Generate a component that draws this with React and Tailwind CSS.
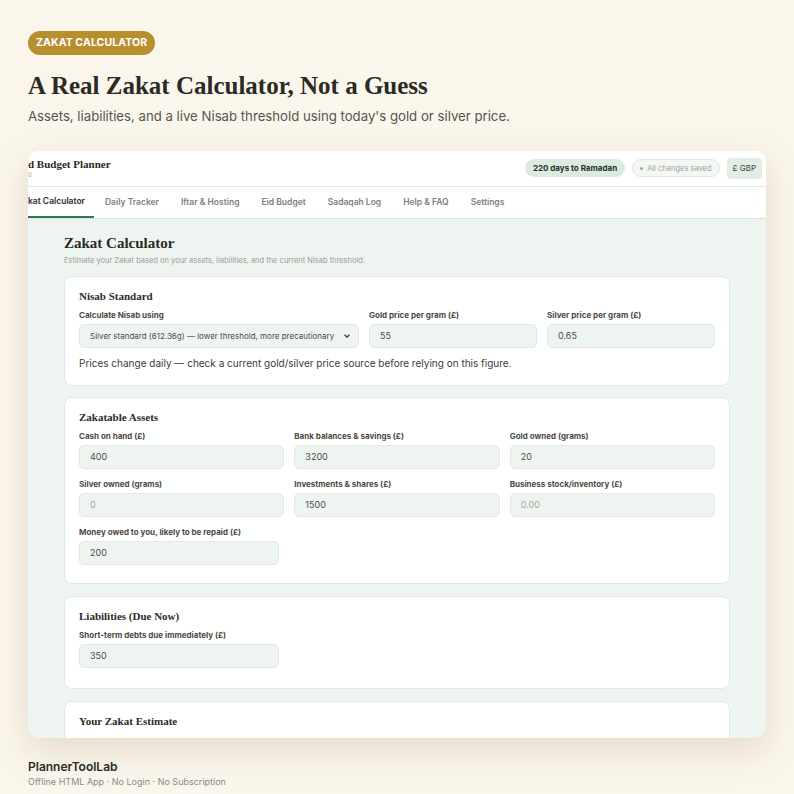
const sans = { fontFamily: '"Inter", "Noto Sans", sans-serif' };

function Field({ label, value, muted, className = "" }) {
  return (
    <div className={className}>
      <div className="text-[8px] font-bold text-[#4a4a44] mb-[3px] leading-[12px] whitespace-nowrap">{label}</div>
      <div
        className={`h-[24px] rounded-[5px] border border-[#e1e9e3] bg-[#eef4ef] px-[10px] flex items-center text-[9px] ${
          muted ? "text-[#a3a8a3]" : "text-[#4b4f4b]"
        }`}
      >
        {value}
      </div>
    </div>
  );
}

function Card({ title, children, className = "" }) {
  return (
    <div className={`shrink-0 bg-white rounded-[8px] border border-[#e2e9e4] px-[14px] pt-[12px] ${className}`}>
      <div className="font-['Liberation_Serif',serif] font-bold text-[11px] text-[#2c2c28] leading-[14px] mb-[6px]">
        {title}
      </div>
      {children}
    </div>
  );
}

export default function App() {
  const tabs = ["kat Calculator", "Daily Tracker", "Iftar & Hosting", "Eid Budget", "Sadaqah Log", "Help & FAQ", "Settings"];
  return (
    <div className="w-[794px] h-[794px] bg-[#fbf6ec] overflow-hidden" style={sans}>
      <div className="px-[28px] pt-[28px]">
        <div className="inline-flex h-[24px] items-center rounded-full bg-[#b88f2e] px-[8px] text-[10.5px] font-bold text-white tracking-[0.1px]">
          ZAKAT CALCULATOR
        </div>
        <h1 className="mt-[14px] font-['Liberation_Serif',serif] font-bold text-[25px] leading-[34px] text-[#2a2a26]">
          A Real Zakat Calculator, Not a Guess
        </h1>
        <p className="mt-[3px] text-[13.2px] leading-[20px] text-[#56554f]">
          Assets, liabilities, and a live Nisab threshold using today's gold or silver price.
        </p>

        <div className="mt-[25px] h-[587px] w-[738px] rounded-[10px] overflow-hidden bg-[#eef4f0] shadow-[0_12px_36px_rgba(130,105,60,0.2)] flex flex-col">
          {/* header */}
          <div className="shrink-0 h-[36px] bg-white border-b border-[#e3ebe5] flex items-center justify-between pr-[4px]">
            <div className="leading-none">
              <div className="font-['Liberation_Serif',serif] font-bold text-[11px] text-[#2a2a26]">d Budget Planner</div>
              <div className="text-[6px] text-[#9a9a94] mt-[2px]">0</div>
            </div>
            <div className="flex items-center gap-[7px]">
              <div className="h-[18px] px-[8px] rounded-full bg-[#dcebe2] flex items-center text-[8px] font-bold text-[#2b2f2b]">
                220 days to Ramadan
              </div>
              <div className="h-[18px] px-[7px] rounded-full border border-[#dfe7e1] bg-[#f4f7f3] flex items-center gap-[4px] text-[7.5px] text-[#9aa59c]">
                <span className="w-[3px] h-[3px] rounded-full bg-[#9aa59c]" />
                All changes saved
              </div>
              <div className="h-[21px] px-[6px] rounded-[4px] bg-[#e2ede6] flex items-center text-[8px] text-[#3f4540]">
                £ GBP
              </div>
            </div>
          </div>
          {/* tabs */}
          <div className="shrink-0 h-[32px] bg-white border-b border-[#d9e6dd] flex items-stretch">
            {tabs.map((t, i) => (
              <div
                key={t}
                className={`flex items-center text-[8.5px] font-semibold ${
                  i === 0 ? "text-[#2a2d2a] border-b-2 border-[#2f7a55] pr-[9px]" : "text-[#7c7f7b] px-[11px]"
                }`}
              >
                {t}
              </div>
            ))}
          </div>
          {/* content */}
          <div className="flex-1 min-h-0 flex flex-col pl-[36px] pr-[36px] pt-[15px]">
            <div className="font-['Liberation_Serif',serif] font-bold text-[15px] leading-[18px] text-[#2a2a26]">
              Zakat Calculator
            </div>
            <div className="text-[7.5px] text-[#9a9e99] mt-[3px]">
              Estimate your Zakat based on your assets, liabilities, and the current Nisab threshold.
            </div>

            <Card title="Nisab Standard" className="mt-[10px] h-[110px]">
              <div className="grid grid-cols-[280px_1fr_1fr] gap-[10px]">
                <div>
                  <div className="text-[8px] font-bold text-[#4a4a44] mb-[3px] leading-[12px]">Calculate Nisab using</div>
                  <div className="h-[24px] rounded-[5px] border border-[#e1e9e3] bg-[#eef4ef] pl-[10px] pr-[7px] flex items-center justify-between text-[8px] text-[#4b4f4b] whitespace-nowrap">
                    <span>Silver standard (612.36g) — lower threshold, more precautionary</span>
                    <svg width="8" height="8" viewBox="0 0 10 10" className="shrink-0">
                      <path d="M2 3.5 L5 6.5 L8 3.5" fill="none" stroke="#333" strokeWidth="1.6" />
                    </svg>
                  </div>
                </div>
                <Field label="Gold price per gram (£)" value="55" />
                <Field label="Silver price per gram (£)" value="0.65" />
              </div>
              <div className="mt-[8px] text-[10px] text-[#3a3b37]">
                Prices change daily — check a current gold/silver price source before relying on this figure.
              </div>
            </Card>

            <Card title="Zakatable Assets" className="mt-[11px] h-[187px]">
              <div className="grid grid-cols-3 gap-x-[10px] gap-y-[9px]">
                <Field label="Cash on hand (£)" value="400" />
                <Field label="Bank balances & savings (£)" value="3200" />
                <Field label="Gold owned (grams)" value="20" />
                <Field label="Silver owned (grams)" value="0" muted />
                <Field label="Investments & shares (£)" value="1500" />
                <Field label="Business stock/inventory (£)" value="0.00" muted />
                <Field label="Money owed to you, likely to be repaid (£)" value="200" className="w-[200px]" />
              </div>
            </Card>

            <Card title="Liabilities (Due Now)" className="mt-[12px] h-[93px]">
              <Field label="Short-term debts due immediately (£)" value="350" className="w-[200px]" />
            </Card>

            <Card title="Your Zakat Estimate" className="mt-[12px] h-[80px]" />
          </div>
        </div>

        <div className="mt-[21px] text-[12px] font-semibold text-[#2a2a26] leading-[16px]">PlannerToolLab</div>
        <div className="text-[9px] text-[#8c8a84] leading-[14px]">
          Offline HTML App · No Login · No Subscription
        </div>
      </div>
    </div>
  );
}
